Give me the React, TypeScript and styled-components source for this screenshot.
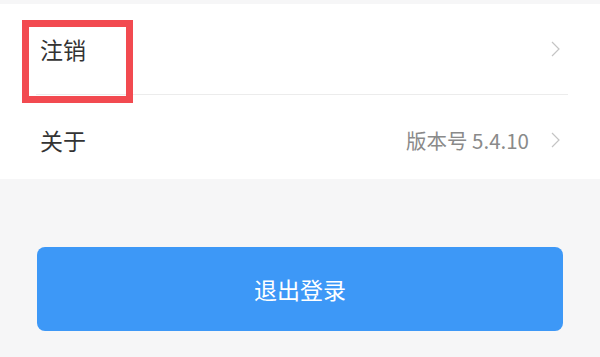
import React from "react";
import styled, { createGlobalStyle } from "styled-components";

const GlobalStyle = createGlobalStyle`
  html, body {
    margin: 0;
    padding: 0;
    background: #f6f6f7;
    font-family: "Noto Sans CJK SC", "Noto Sans", sans-serif;
  }
`;

const Page = styled.div`
  width: 600px;
  height: 357px;
  overflow: hidden;
  background: #f6f6f7;
  padding-top: 4px;
  box-sizing: border-box;
`;

const Panel = styled.div`
  background: #ffffff;
  padding: 0 32px 0 36px;
`;

const Row = styled.div<{ $divider?: boolean; $height: number; $offset?: number }>`
  position: relative;
  height: ${({ $height }) => $height}px;
  padding-top: ${({ $offset = 0 }) => $offset}px;
  box-sizing: border-box;
  display: flex;
  align-items: center;
  border-bottom: ${({ $divider }) => ($divider ? "1px solid #ececec" : "none")};
`;

const Label = styled.span`
  flex: 1;
  padding-left: 4px;
  font-size: 23px;
  color: #333333;
  line-height: 1;
`;

const Value = styled.span`
  font-size: 20.5px;
  color: #8a8a8a;
  margin-right: 22px;
  line-height: 1;
`;

const Chevron = styled.svg`
  width: 9px;
  height: 16px;
  margin-right: 8px;
  flex-shrink: 0;
`;

const Highlight = styled.div`
  position: absolute;
  left: -14px;
  top: 16px;
  width: 111px;
  height: 83px;
  border: 7px solid #f24a50;
  box-sizing: border-box;
  pointer-events: none;
`;

const ButtonWrap = styled.div`
  padding: 68px 37px 0;
`;

const LogoutButton = styled.button`
  width: 100%;
  height: 84px;
  border: none;
  border-radius: 8px;
  background: #3d98f7;
  color: #ffffff;
  font-family: "Noto Sans CJK SC", "Noto Sans", sans-serif;
  font-size: 23px;
  cursor: pointer;
`;

const Arrow = () => (
  <Chevron viewBox="0 0 9 16" fill="none">
    <path d="M1 1l7 7-7 7" stroke="#c4c4c4" strokeWidth="1.2" />
  </Chevron>
);

export default function App() {
  return (
    <Page>
      <GlobalStyle />
      <Panel>
        <Row $divider $height={91}>
          <Label>注销</Label>
          <Arrow />
          <Highlight />
        </Row>
        <Row $height={84} $offset={6}>
          <Label>关于</Label>
          <Value>版本号 5.4.10</Value>
          <Arrow />
        </Row>
      </Panel>
      <ButtonWrap>
        <LogoutButton>退出登录</LogoutButton>
      </ButtonWrap>
    </Page>
  );
}
